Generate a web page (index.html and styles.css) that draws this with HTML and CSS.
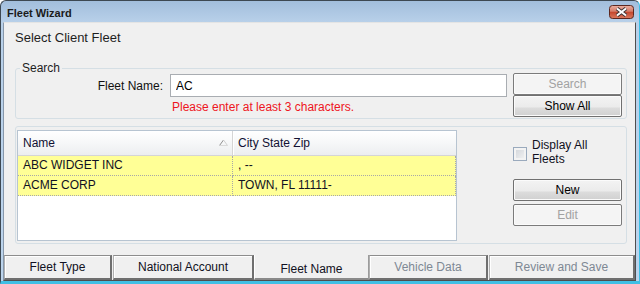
FILE: index.html
```html
<!DOCTYPE html>
<html lang="en">
<head>
    <meta charset="UTF-8">
    <title>Fleet Wizard</title>
    <link rel="stylesheet" href="styles.css">
</head>
<body>
    <div class="window">
        <div class="titlebar">
            <span class="title">Fleet Wizard</span>
            <svg class="close-btn" width="25" height="14" viewBox="0 0 25 14">
                <defs>
                    <linearGradient id="closeFill" x1="0" y1="0" x2="0" y2="1">
                        <stop offset="0" stop-color="#eab0a2"/>
                        <stop offset="0.45" stop-color="#d57c68"/>
                        <stop offset="0.5" stop-color="#c4462d"/>
                        <stop offset="1" stop-color="#da7a5f"/>
                    </linearGradient>
                </defs>
                <rect x="0.5" y="0.5" width="24" height="13" rx="3" fill="url(#closeFill)" stroke="#5c2820"/>
                <path d="M8 3.5 L17 10.5 M17 3.5 L8 10.5" stroke="#3e3434" stroke-width="4"/>
                <path d="M8 3.5 L17 10.5 M17 3.5 L8 10.5" stroke="#ffffff" stroke-width="2"/>
            </svg>
        </div>

        <div class="client">
            <h1 class="page-title">Select Client Fleet</h1>

            <!-- Search box -->
            <fieldset class="group search-group">
                <legend>Search</legend>
                <div class="search-body">
                    <div class="search-fields">
                        <label for="fleetName">Fleet Name:</label>
                        <input type="text" id="fleetName" name="fleetName" value="AC">
                        <span class="error">Please enter at least 3 characters.</span>
                    </div>
                    <div class="btn-stack">
                        <button class="btn" disabled>Search</button>
                        <button class="btn">Show All</button>
                    </div>
                </div>
            </fieldset>

            <!-- Results -->
            <fieldset class="group list-group">
                <div class="list-body">
                    <div class="grid">
                        <table class="fleet-table">
                            <colgroup>
                                <col class="col-name">
                                <col class="col-city">
                            </colgroup>
                            <thead>
                                <tr>
                                    <th class="th-name">
                                        <div class="th-inner">
                                            <span>Name</span>
                                            <svg class="sort-glyph" width="9" height="7" viewBox="0 0 9 7">
                                                <path d="M0.5 6.5 L4.5 1" stroke="#8e8e8e" fill="none"/>
                                                <path d="M4.5 1 L8.5 6.5" stroke="#cfcfcf" fill="none"/>
                                                <path d="M0.5 6.5 L8.5 6.5" stroke="#dadada" fill="none"/>
                                            </svg>
                                        </div>
                                    </th>
                                    <th class="th-city">City State Zip</th>
                                </tr>
                            </thead>
                            <tbody>
                                <tr>
                                    <td>ABC WIDGET INC</td>
                                    <td>, --</td>
                                </tr>
                                <tr>
                                    <td>ACME CORP</td>
                                    <td>TOWN, FL 11111-</td>
                                </tr>
                            </tbody>
                        </table>
                    </div>

                    <div class="side-panel">
                        <label class="check">
                            <span class="check-box"></span>
                            <span>Display All<br>Fleets</span>
                        </label>
                        <button class="btn new-btn">New</button>
                        <button class="btn edit-btn" disabled>Edit</button>
                    </div>
                </div>
            </fieldset>

            <!-- Wizard steps -->
            <div class="tabs">
                <div class="tab tab-type">Fleet Type</div>
                <div class="tab tab-account">National Account</div>
                <div class="tab tab-active">Fleet Name</div>
                <div class="tab tab-vehicle is-disabled">Vehicle Data</div>
                <div class="tab tab-review is-disabled">Review and Save</div>
            </div>
        </div>
    </div>
</body>
</html>
```

FILE: styles.css
```css
body {
    margin: 0;
    font-family: "Liberation Sans", Arial, sans-serif;
    font-size: 12px;
    color: #111111;
    background-color: #ffffff;
}
.window {
    width: 640px;
    height: 284px;
    box-sizing: border-box;
    display: flex;
    flex-direction: column;
    border: 1px solid #3d4852;
    border-right-color: #3cbfe6;
    border-bottom: 3px solid #40bfe4;
    border-radius: 6px 6px 0 0;
    background: linear-gradient(#a2bedc, #b8d0e9 21px, #bcd4ec);
}
.titlebar {
    height: 21px;
    display: flex;
    align-items: center;
    justify-content: space-between;
    padding: 0 5px 0 6px;
}
.title {
    font-size: 11px;
    font-weight: bold;
    line-height: 15px;
    padding-top: 3px;
    color: #1b1b1b;
}
.close-btn {
    display: block;
}
.client {
    flex: 1;
    display: flex;
    flex-direction: column;
    margin: 0 3px 0 2px;
    background-color: #f0f0f0;
    border: 1px solid #e4e4e4;
    border-left-color: #8797aa;
    border-right-color: #4e4e4e;
    border-bottom-color: #4e4e4e;
}
.page-title {
    margin: 7px 0 0 11px;
    font-size: 13px;
    font-weight: normal;
    line-height: 16px;
    color: #1e1e1e;
}
.group {
    min-width: 0;
    border: 1px solid #d5dfe5;
    border-radius: 3px;
}
.search-group {
    margin: 15px 8px 0 11px;
    padding: 0 4px 1px 0;
}
.search-group legend {
    margin-left: 4px;
    padding: 0 2px;
    line-height: 14px;
    color: #1e1e1e;
}
.search-body {
    display: flex;
    align-items: flex-start;
}
.search-fields {
    display: grid;
    grid-template-columns: 147px 337px;
    column-gap: 7px;
    row-gap: 3px;
    align-items: center;
    margin-top: -1px;
}
.search-fields label {
    text-align: right;
    line-height: 14px;
}
.search-fields input {
    width: 337px;
    height: 23px;
    box-sizing: border-box;
    margin: 0;
    padding: 0 5px;
    border: 1px solid #a9adb2;
    background-color: #ffffff;
    font-family: inherit;
    font-size: 12px;
    color: #000000;
    outline: none;
}
.error {
    grid-column: 2;
    padding-left: 2px;
    line-height: 14px;
    color: #ee1522;
}
.btn-stack {
    display: flex;
    flex-direction: column;
    margin: -2px 0 0 6px;
}
.btn {
    display: block;
    width: 109px;
    height: 22px;
    box-sizing: border-box;
    margin: 0;
    padding: 0;
    font-family: inherit;
    font-size: 12px;
    color: #000000;
    border: 1px solid #707070;
    border-radius: 2px;
    background: linear-gradient(#f3f3f3, #ebebeb 55%, #dcdcdc 60%, #d0d0d0);
    box-shadow: inset 0 0 0 1px #fbfbfb;
}
.btn:disabled {
    color: #a2a2a2;
    border-color: #7b7b7b;
    background: #f4f4f4;
}
.list-group {
    margin: 7px 8px 0 11px;
    padding: 3px 4px 2px 1px;
}
.list-body {
    display: flex;
    justify-content: space-between;
}
.grid {
    width: 440px;
    height: 111px;
    box-sizing: border-box;
    border: 1px solid #b7c4d1;
    background-color: #ffffff;
}
.fleet-table {
    width: 100%;
    border-spacing: 0;
    table-layout: fixed;
}
.col-name {
    width: 215px;
}
.fleet-table th {
    padding: 0 0 0 5px;
    line-height: 24px;
    text-align: left;
    font-weight: normal;
    color: #111133;
    background: linear-gradient(#ffffff, #f7f8f9 45%, #eceef0);
    border-bottom: 1px solid #d5d5d5;
}
.th-name {
    border-right: 1px solid #d5d5d5;
}
.th-city {
    box-shadow: inset 1px 0 0 #ffffff;
}
.th-inner {
    display: flex;
    align-items: center;
    justify-content: space-between;
    padding-right: 4px;
}
.sort-glyph {
    display: block;
    margin-bottom: 2px;
}
.fleet-table td {
    padding: 0 5px;
    line-height: 19px;
    white-space: nowrap;
    color: #111122;
    background-color: #ffff96;
    border-bottom: 1px dotted #a8a8a8;
    border-right: 1px dotted #a8a8a8;
}
.side-panel {
    width: 109px;
    padding-top: 8px;
    display: flex;
    flex-direction: column;
}
.check {
    display: flex;
    align-items: flex-start;
    gap: 5px;
    line-height: 14px;
    color: #111122;
}
.check-box {
    flex: none;
    width: 14px;
    height: 14px;
    box-sizing: border-box;
    margin-top: 9px;
    border: 1px solid #9aaabd;
    background: linear-gradient(135deg, #cfd3d8, #f5f5f5);
    box-shadow: inset 0 0 0 2px #f3f3f3;
}
.new-btn {
    margin-top: 13px;
}
.edit-btn {
    margin-top: 3px;
}
.tabs {
    display: flex;
    margin-top: auto;
    height: 25px;
}
.tab {
    height: 25px;
    box-sizing: border-box;
    text-align: center;
    line-height: 22px;
    white-space: nowrap;
    color: #111122;
    background-color: #f0f0f0;
    border-top: 1px solid #8d8d8d;
    border-left: 1px solid #b0b0b0;
    border-right: 2px solid #6f6f6f;
    border-bottom: 2px solid #6f6f6f;
    box-shadow: inset 1px 1px 0 #ffffff;
}
.tab-type {
    width: 108px;
}
.tab-account {
    width: 141px;
    margin-left: 1px;
}
.tab-active {
    width: 115px;
    padding-top: 7px;
    line-height: 14px;
    border-top: none;
    border-left: 1px solid #ffffff;
    border-right: 1px solid #9c9c9c;
    border-bottom: 2px solid #8a8a8a;
    box-shadow: none;
}
.tab-vehicle {
    width: 119px;
}
.tab-review {
    width: 146px;
    margin-left: 1px;
}
.is-disabled {
    color: #7e8894;
}
```
